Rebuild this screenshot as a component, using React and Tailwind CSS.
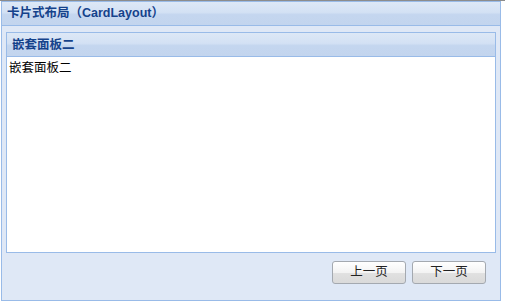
export default function App() {
  const font = { fontFamily: '"Liberation Sans", "Noto Sans CJK SC", sans-serif' };

  return (
    <div className="w-[505px] h-[306px] bg-white border-t border-[#8c8c8c]" style={font}>
      {/* outer panel */}
      <div className="ml-[1px] w-[500px] h-[300px] flex flex-col border border-[#99bbe8] bg-[#dfe8f6]">
        <div className="h-[24px] shrink-0 flex items-center px-[5px] border-b border-[#99bbe8] bg-[linear-gradient(#dde8f6_0%,#d3e1f4_45%,#c4d6ef_55%,#c3d5ee_100%)]">
          <span className="text-[12.5px] font-bold text-[#15428b] leading-none">卡片式布局（CardLayout）</span>
        </div>

        <div className="flex-1 flex flex-col pt-[6px] px-[4px]">
          {/* nested panel */}
          <div className="w-[490px] h-[221px] flex flex-col border border-[#99bbe8]">
            <div className="h-[24px] shrink-0 flex items-center px-[5px] pt-[2px] border-b border-[#99bbe8] bg-[linear-gradient(#dde8f6_0%,#d3e1f4_45%,#c4d6ef_55%,#c3d5ee_100%)]">
              <span className="text-[12.5px] font-bold text-[#15428b] leading-none">嵌套面板二</span>
            </div>
            <div className="flex-1 bg-white px-[2px] pt-[5px] text-[12.5px] leading-none text-black">嵌套面板二</div>
          </div>

          {/* toolbar */}
          <div className="flex justify-end gap-[6px] pt-[8px] pr-[10px]">
            <button className="w-[74px] h-[23px] rounded-[3px] border border-[#a4a9b0] bg-[linear-gradient(#ffffff_0%,#f3f3f3_50%,#e0e0e0_55%,#dadada_100%)] text-[12.5px] text-[#222]">上一页</button>
            <button className="w-[74px] h-[23px] rounded-[3px] border border-[#a4a9b0] bg-[linear-gradient(#ffffff_0%,#f3f3f3_50%,#e0e0e0_55%,#dadada_100%)] text-[12.5px] text-[#222]">下一页</button>
          </div>
        </div>
      </div>
    </div>
  );
}
